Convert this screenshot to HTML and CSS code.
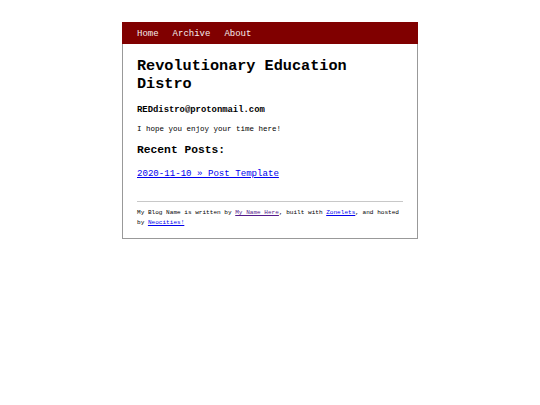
FILE: index.html
```html
<!DOCTYPE html>
<html>
<head>
<meta charset="utf-8">
<link rel="stylesheet" href="styles.css">
</head>
<body>
<div class="container">
  <div class="header">
    <ul class="nav">
      <li><a href="#">Home</a></li>
      <li><a href="#">Archive</a></li>
      <li><a href="#">About</a></li>
    </ul>
  </div>
  <div class="content">
    <h1 class="title">Revolutionary Education Distro</h1>
    <p class="email">REDdistro@protonmail.com</p>
    <p class="intro">I hope you enjoy your time here!</p>
    <h2 class="recent">Recent Posts:</h2>
    <ul class="posts">
      <li><a href="#">2020-11-10 » Post Template</a></li>
    </ul>
    <div class="footer">
      <hr class="rule">
      <p class="credit">My Blog Name is written by <a class="visited" href="#">My Name Here</a>, built with <a href="#">Zonelets</a>, and hosted by <a href="#">Neocities!</a></p>
    </div>
  </div>
</div>
</body>
</html>
```
FILE: styles.css
```css
html, body {
  margin: 0;
  padding: 0;
  background: #ffffff;
}
body {
  font-family: "Liberation Mono", "Courier New", monospace;
  color: #000;
  padding-top: 22px;
}
.container {
  width: 294px;
  margin: 0 auto;
  border: 1px solid #999;
  border-top: none;
}
.header {
  background: #800000;
  height: 22px;
  margin: 0 -1px;
  display: flex;
  align-items: center;
}
.nav {
  list-style: none;
  margin: 0;
  padding: 0 0 2px 15px;
  display: flex;
  gap: 14px;
}
.nav a {
  color: #f5ecec;
  text-decoration: none;
  font-size: 9px;
  line-height: 11px;
}
.content {
  padding: 13px 14px 10px 14px;
}
.title {
  font-size: 15.2px;
  line-height: 18px;
  margin: 0;
  font-weight: bold;
}
.email {
  font-size: 8.9px;
  font-weight: bold;
  line-height: 11px;
  margin: 12px 0 0 0;
}
.intro {
  font-size: 7.5px;
  line-height: 10px;
  margin: 8px 0 0 0;
}
.recent {
  font-size: 11.3px;
  line-height: 14px;
  margin: 9px 0 0 0;
  font-weight: bold;
}
.posts {
  list-style: none;
  margin: 9px 0 0 0;
  padding: 0;
  line-height: 12px;
}
.posts a {
  font-size: 9.1px;
  line-height: 12px;
  color: #0000ee;
}
.footer {
  margin-top: 21px;
}
.rule {
  border: none;
  border-top: 1px solid #c8c8c8;
  margin: 0;
}
.credit {
  font-size: 6.07px;
  line-height: 10px;
  margin: 6px 0 0 0;
}
.credit a {
  color: #0000ee;
  line-height: 10px;
}
.credit a.visited {
  color: #551a8b;
}
```
